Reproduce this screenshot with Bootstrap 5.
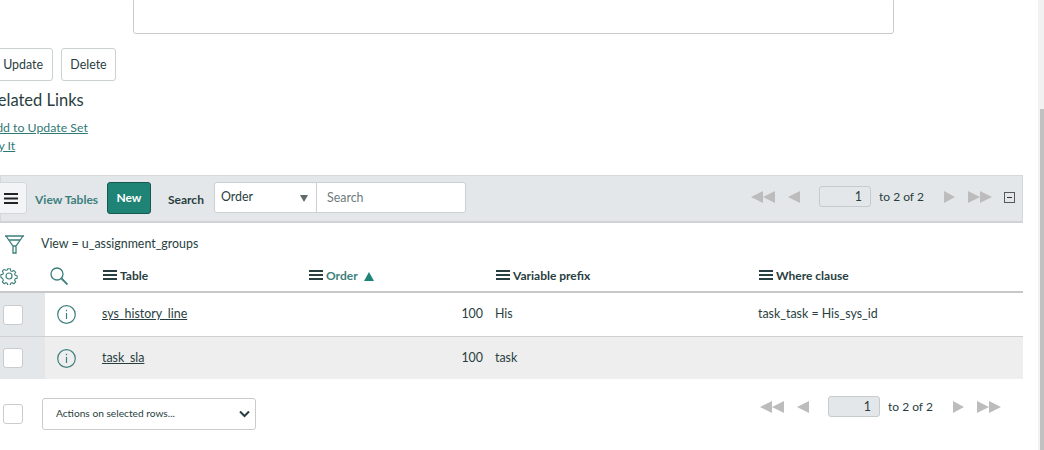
<!DOCTYPE html>
<html lang="en"><head><meta charset="utf-8"><title>View Tables</title>
<link href="https://cdn.jsdelivr.net/npm/bootstrap@5.3.0/dist/css/bootstrap.min.css" rel="stylesheet">
<style>
html,body{height:450px;overflow:hidden;background:#fff}
body{font-family:"Lato","Liberation Sans",sans-serif;font-size:12.4px;color:#293e40}
.stage{height:450px}
.pane{width:1038px;overflow:hidden}
.track{width:6px;background:#f1f1f1;padding-top:109px;padding-left:2px}
.thumb{height:341px;background:#c1c1c1}
.notes{width:761px;height:36px;margin:-2px 0 0 133px;border:1px solid #c9cccf;border-radius:3px}
.formbtns{margin:14px 0 0 -30px;gap:8px}
.wbtn{height:33px;border:1px solid #cbd0d3;border-radius:3px;background:#fff;color:#293e40;font-size:12.4px;padding:0 10px;line-height:31px}
.wbtn.wide{width:83px;text-align:right;padding-right:9px}
.wbtn.del{width:55px;padding:0;text-align:center}
.rel{margin:8px 0 0 -12px}
.rel h5{font-size:16.500px;font-weight:400;margin:0 0 8px;line-height:22px}
.rel a{display:block;color:#2f7a78;font-size:12.3px;line-height:18px}
.bar{width:1023px;height:48px;margin-top:20px;background:#e4e7ea;border:1px solid #d5d8da;border-bottom:2px solid #d0d3d6;padding-top:6px}
.menubtn{width:40px;height:32px;margin-left:-14px;border:1px solid #d3d6d9;border-radius:3px;background:#f3f4f5}
.vt{color:#3c7f7c;font-weight:700;margin-left:8px;font-size:12px;width:64px;white-space:nowrap}
.newbtn{height:32px;width:44px;margin-left:8px;background:#1f8476;border:1px solid #17594f;border-radius:3px;color:#fff;font-weight:700;font-size:12px;padding:0}
.sl{margin-left:17px;font-weight:700;font-size:12px;color:#293e40;width:37px}
.grp{margin-left:9px;height:31px;border:1px solid #cbd0d3;border-radius:3px;background:#fff;width:252px}
.sel{width:102px;border-right:1px solid #cbd0d3;padding:0 7px 1px 6px;height:100%}
.ph{padding:2px 0 0 10px;color:#6f7b7d}
.tri{width:0;height:0;border-left:4px solid transparent;border-right:4px solid transparent;border-top:7px solid #5f6b6d;margin:3px 1px 0 0}
.pgbox{width:52px;height:21px;border:1px solid #c6cbce;border-radius:3px;background:#e4e7ea;text-align:right;padding:0 8px;line-height:19px;margin:0 8px 0 19px}
.arrows{fill:#bcbcbc;display:block}
.gap13{margin-left:13px}
.pgtext{width:65px;font-size:12px}
.bar .pager{margin-left:auto;padding-right:7px;padding-top:4px}
.minus{width:11px;height:11px;border:1px solid #55595b;margin-left:12px;position:relative;top:1px}
.minus:after{content:"";display:block;width:5px;height:1px;background:#333;margin:4px 2px}
.filter{height:43px;padding-left:5px}
.filter span{margin-left:17px}
.grid{width:1023px;table-layout:fixed;border-collapse:separate;border-spacing:0;margin:0;--bs-table-bg:transparent;color:#293e40}
.grid th,.grid td{vertical-align:middle;border:0;font-size:12.4px}
.grid th{padding:0 8px 5px;height:27px;font-size:12px;font-weight:700;border-bottom:2px solid #c8c8c8}
.grid td{padding:0 8px 0 7px;height:44px;border-bottom:1px solid #d0d0d0}
.grid .r2 td{background:#eee;height:42px;border-bottom:0}
.grid td.side,.grid th.side{padding:0 0 0 3px}
.grid th.side,.grid th.zero{padding-bottom:5px}
.grid th.zero,.grid td.zero{padding-left:0;padding-right:0}
.grid td.side{background:#e4e7ea}
.grid a{color:#293e40}
.cb{display:block;width:20px;height:20px;border:1px solid #c9cccf;border-radius:3px;background:#fff}
.grid .num{text-align:right;padding-right:5px}
.hb{display:inline-block;width:14px;height:10px;margin-right:3px;border-top:2px solid #293e40;border-bottom:2px solid #293e40;position:relative}
.hb:after{content:"";position:absolute;left:0;right:0;top:2px;height:2px;background:#293e40}
.grid th.sorted{color:#3c7f7c}
.gear{margin-left:-3px}
.lens{margin-left:5px}
.info{margin-left:12px}
.foot{padding:19px 0 0 3px}
.actions{width:214px;height:32px;margin-left:19px;font-size:10.2px;border-color:#c9cccf;border-radius:3px;padding:0 0 0 13px;color:#293e40;font-family:inherit;background-image:url("data:image/svg+xml,%3csvg xmlns='http://www.w3.org/2000/svg' viewBox='0 0 11 8'%3e%3cpath fill='none' stroke='%23293e40' stroke-width='2' d='M1 1.500l4.500 4.500 4.500-4.500'/%3e%3c/svg%3e");background-position:right 5px center;background-size:11px 8px}
.foot .pager{margin-left:auto;margin-right:37px;margin-top:-15px}
</style></head><body>
<div class="stage d-flex">
<main class="pane">
<div class="notes"></div>
<div class="formbtns d-flex"><button class="wbtn wide">Update</button><button class="wbtn del">Delete</button></div>
<div class="rel"><h5>Related Links</h5><a href="#">Add to Update Set</a><a href="#">Try It</a></div>
<div class="bar d-flex align-items-start">
<button class="menubtn d-flex align-items-center justify-content-end pe-2"><svg width="14" height="11" viewBox="0 0 14 11"><path d="M0 1h14M0 5.500h14M0 10h14" stroke="#222" stroke-width="2"/></svg></button>
<span class="vt align-self-center mb-1">View Tables</span>
<button class="newbtn">New</button>
<span class="sl align-self-center mb-1">Search</span>
<div class="grp d-flex align-items-center"><div class="sel d-flex align-items-center justify-content-between"><span>Order</span><span class="tri"></span></div><span class="ph">Search</span></div>
<div class="pager d-flex align-items-center">
<svg class="arrows" width="24" height="12" viewBox="0 0 24 12"><path d="M0 6l12-6v12zM12 6l12-6v12z"/></svg>
<svg class="arrows gap13" width="12" height="12" viewBox="0 0 12 12"><path d="M0 6l12-6v12z"/></svg>
<div class="pgbox">1</div><span class="pgtext">to 2 of 2</span>
<svg class="arrows" width="11" height="12" viewBox="0 0 11 12"><path d="M0 0l11 6-11 6z"/></svg>
<svg class="arrows gap13" width="24" height="12" viewBox="0 0 24 12"><path d="M0 0l12 6-12 6zM12 0l12 6-12 6z"/></svg>
<span class="minus"></span>
</div></div>
<div class="filter d-flex align-items-center">
<svg width="19" height="20" viewBox="0 0 19 20" fill="none" stroke="#3c7f7c" stroke-width="1.300"><path d="M0 1h19M1 1l7 10h3l7-10M4 5h11M8 11h3v7h-3z"/></svg>
<span>View = u_assignment_groups</span></div>
<table class="table grid"><colgroup><col style="width:45px"><col style="width:50px"><col style="width:206px"><col style="width:187px"><col style="width:263px"><col></colgroup>
<thead><tr>
<th class="side"><svg class="d-block gear" width="18" height="18" viewBox="0 0 18 18" fill="none" stroke="#3c7f7c" stroke-width="1.200"><circle cx="9" cy="9" r="3"/><path d="M7.600 1h2.800l.5 2.300 1.500.7 2-1.200 2 2-1.200 2 .7 1.500 2.100.5v2.800l-2.100.5-.7 1.500 1.200 2-2 2-2-1.200-1.500.7-.5 2.100H7.600l-.5-2.100-1.500-.7-2 1.200-2-2 1.200-2-.7-1.500L0 10.400V7.600l2.100-.5.7-1.500-1.200-2 2-2 2 1.200 1.500-.7z" transform="translate(.9 .9) scale(.9)"/></svg></th>
<th class="zero"><svg class="d-block lens" width="18" height="18" viewBox="0 0 18 18" fill="none" stroke="#3c7f7c" stroke-width="1.300"><circle cx="7" cy="7" r="6"/><path d="M11.500 11.500l6 6" stroke-width="1.800"/></svg></th>
<th><span class="hb"></span>Table</th>
<th class="sorted"><span class="hb"></span>Order <svg class="ms-1" width="10" height="9" viewBox="0 0 10 9" fill="#1f8476"><path d="M5 0l5 9H0z"/></svg></th>
<th><span class="hb"></span>Variable prefix</th>
<th><span class="hb"></span>Where clause</th></tr></thead>
<tbody>
<tr class="r1"><td class="side"><span class="cb"></span></td><td class="zero"><svg class="d-block info" width="19" height="19" viewBox="0 0 19 19" fill="none" stroke="#3c7f7c" stroke-width="1.200"><circle cx="9.500" cy="9.500" r="8.800"/><path d="M9.500 8v6M9.500 4.800v1.500"/></svg></td><td><a href="#">sys_history_line</a></td><td class="num">100</td><td>His</td><td>task_task = His_sys_id</td></tr>
<tr class="r2"><td class="side"><span class="cb"></span></td><td class="zero"><svg class="d-block info" width="19" height="19" viewBox="0 0 19 19" fill="none" stroke="#3c7f7c" stroke-width="1.200"><circle cx="9.500" cy="9.500" r="8.800"/><path d="M9.500 8v6M9.500 4.800v1.500"/></svg></td><td><a href="#">task_sla</a></td><td class="num">100</td><td>task</td><td></td></tr>
</tbody></table>
<div class="foot d-flex align-items-center">
<span class="cb"></span>
<select class="form-select actions"><option>Actions on selected rows...</option></select>
<div class="pager d-flex align-items-center">
<svg class="arrows" width="24" height="12" viewBox="0 0 24 12"><path d="M0 6l12-6v12zM12 6l12-6v12z"/></svg>
<svg class="arrows gap13" width="12" height="12" viewBox="0 0 12 12"><path d="M0 6l12-6v12z"/></svg>
<div class="pgbox">1</div><span class="pgtext">to 2 of 2</span>
<svg class="arrows" width="11" height="12" viewBox="0 0 11 12"><path d="M0 0l11 6-11 6z"/></svg>
<svg class="arrows gap13" width="24" height="12" viewBox="0 0 24 12"><path d="M0 0l12 6-12 6zM12 0l12 6-12 6z"/></svg>
</div></div>
</main>
<aside class="track"><div class="thumb"></div></aside>
</div>
<script src="https://cdn.jsdelivr.net/npm/bootstrap@5.3.0/dist/js/bootstrap.bundle.min.js"></script>
</body></html>
